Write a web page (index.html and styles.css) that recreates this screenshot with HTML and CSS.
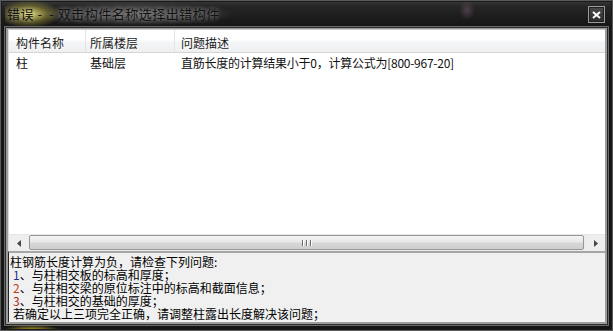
FILE: index.html
```html
<!DOCTYPE html>
<html lang="zh">
<head>
<meta charset="utf-8">
<title>错误</title>
<link rel="stylesheet" href="styles.css">
</head>
<body>
<div class="window">
  <div class="titlebar">
    <span class="title">错误 -&nbsp; - 双击构件名称选择出错构件</span>
    <div class="close">
      <svg width="9" height="8" viewBox="0 0 9 8"><path d="M1 1 L8 7 M8 1 L1 7" stroke="#fff" stroke-width="2" fill="none"/></svg>
    </div>
  </div>
  <div class="client">
    <div class="list">
      <div class="list-header">
        <div class="col c1">构件名称</div>
        <div class="col c2">所属楼层</div>
        <div class="col c3">问题描述</div>
      </div>
      <div class="list-body">
        <div class="row">
          <div class="col c1">柱</div>
          <div class="col c2">基础层</div>
          <div class="col c3 desc">直筋长度的计算结果小于0，计算公式为[800-967-20]</div>
        </div>
      </div>
      <div class="hscroll">
        <div class="sbtn"><svg width="4" height="7" viewBox="0 0 4 7"><path d="M4 0 L0 3.5 L4 7 Z" fill="#444"/></svg></div>
        <div class="thumb"><span class="grip"></span><span class="grip"></span><span class="grip"></span></div>
        <div class="sbtn"><svg width="4" height="7" viewBox="0 0 4 7"><path d="M0 0 L4 3.5 L0 7 Z" fill="#444"/></svg></div>
      </div>
    </div>
    <div class="message">
      <div class="line">柱钢筋长度计算为负，请检查下列问题:</div>
      <div class="line ind"><span class="n1">1</span>、与柱相交板的标高和厚度；</div>
      <div class="line ind"><span class="n2">2</span>、与柱相交梁的原位标注中的标高和截面信息；</div>
      <div class="line ind"><span class="n3">3</span>、与柱相交的基础的厚度；</div>
      <div class="line ind">若确定以上三项完全正确，请调整柱露出长度解决该问题；</div>
    </div>
  </div>
</div>
</body>
</html>
```

FILE: styles.css
```css
* { box-sizing: border-box; }
html, body { margin: 0; padding: 0; }
body {
  width: 613px;
  height: 331px;
  background: #111;
  font-family: "Noto Sans CJK SC", "Noto Sans", sans-serif;
  overflow: hidden;
}
.window {
  width: 613px;
  height: 331px;
  display: flex;
  flex-direction: column;
  background:
    radial-gradient(ellipse 30px 6px at 32px 331px, rgba(230,200,40,0.9), rgba(230,200,40,0) 100%),
    linear-gradient(#3c3c3c 0, #262626 6px, #141414 28px, #141414 100%);
  box-shadow: inset 0 0 0 1px #5a5a5a, inset 0 0 0 2px #1a1a1a;
  padding: 0 5px 4px 5px;
}
.titlebar {
  height: 28px;
  flex: none;
  display: flex;
  align-items: flex-start;
  justify-content: space-between;
  padding: 5px 3px 0 2px;
  background:
    radial-gradient(ellipse 32px 14px at 24px 14px, rgba(240,230,120,0.95), rgba(200,190,60,0.35) 60%, rgba(0,0,0,0) 100%),
    radial-gradient(ellipse 100px 12px at 130px 14px, rgba(120,120,120,0.75), rgba(0,0,0,0) 100%),
    radial-gradient(ellipse 8px 10px at 462px 10px, rgba(120,90,110,0.5), rgba(0,0,0,0) 100%);
}
.title {
  font-size: 13px;
  line-height: 18px;
  color: #111;
  letter-spacing: 0.5px;
  white-space: pre;
  text-shadow: 0 0 4px rgba(220,220,220,0.6);
}
.close {
  width: 17px;
  height: 17px;
  margin-top: 1px;
  border: 1px solid #9a9a9a;
  background: linear-gradient(#4a4a4a, #2a2a2a);
  display: flex;
  align-items: center;
  justify-content: center;
  box-shadow: inset 0 0 0 1px #222;
}
.client {
  flex: 1;
  display: flex;
  flex-direction: column;
  border: 2px solid #9c9c9c;
  border-top-width: 1px;
  border-bottom-width: 2px;
  background: #f0f0f0;
  box-shadow: 0 0 0 1px #2a2a2a, 0 0 0 2px #6a6a6a;
  margin: 0 1px 3px 1px;
}
.list {
  flex: 1;
  display: flex;
  flex-direction: column;
  background: #fff;
  border-left: 1px solid #dcdcdc;
  border-top: 1px solid #c8c8c8;
}
.list-header {
  display: flex;
  height: 23px;
  border-bottom: 1px solid #d5d5d5;
  background: linear-gradient(#ffffff 0, #ffffff 45%, #f3f4f6 55%, #eff0f2 100%);
  font-size: 12px;
  color: #1a1a1a;
}
.list-header .col {
  padding-top: 4px;
  line-height: 18px;
  border-right: 1px solid #e2e3e5;
}
.list-header .col.c3 { border-right: none; }
.col { white-space: nowrap; }
.c1 { width: 77px; padding-left: 7px; }
.c2 { width: 89px; padding-left: 4px; }
.c3 { flex: 1; padding-left: 6px; }
.desc { letter-spacing: -0.25px; }
.list-body {
  flex: 1;
  font-size: 12px;
  color: #111;
}
.row {
  display: flex;
  height: 20px;
  line-height: 20px;
}
.hscroll {
  height: 17px;
  display: flex;
  background: #ececec;
  border-top: 1px solid #e6e6e6;
}
.sbtn {
  width: 19px;
  display: flex;
  align-items: center;
  justify-content: center;
  background: #eeeeee;
}
.thumb {
  flex: 1;
  margin: 0 2px 1px 1px;
  border: 1px solid #979797;
  border-radius: 2px;
  background: linear-gradient(#f4f4f4 0, #e8e8e8 45%, #d6d6d6 55%, #cfcfcf 100%);
  display: flex;
  align-items: center;
  justify-content: center;
  gap: 1px;
}
.grip {
  width: 1px;
  height: 6px;
  background: #6a6a6a;
  box-shadow: 1px 0 0 #fff;
  margin: 0 1px;
}
.message {
  flex: none;
  height: 71px;
  border-top: 2px solid #a6a6a6;
  border-left: 1px solid #222;
  padding: 2px 0 0 1px;
  background: #f0f0f0;
  font-size: 12px;
  line-height: 13px;
  color: #000;
}
.line { white-space: nowrap; height: 13px; }
.ind { padding-left: 3px; }
.n1 { color: #1c2f8c; }
.n2 { color: #c2400c; }
.n3 { color: #a52a10; }
```
